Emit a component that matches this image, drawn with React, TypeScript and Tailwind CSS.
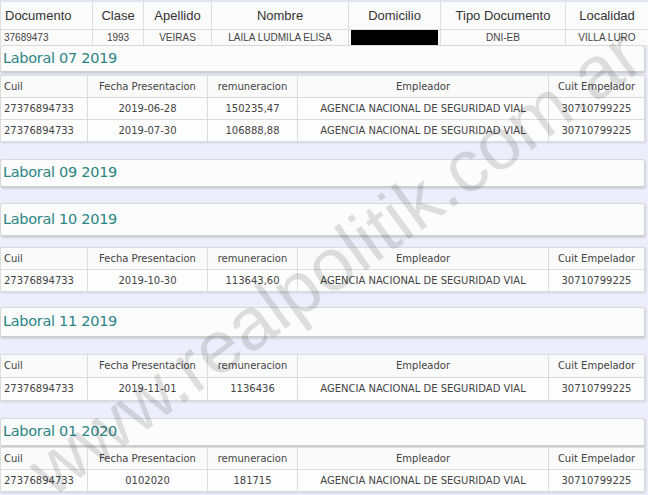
import React from "react";

type Row = { cuil: string; fecha: string; rem: string; emp: string; cuit: string };

const EMP = "AGENCIA NACIONAL DE SEGURIDAD VIAL";
const CUIT = "30710799225";
const CUIL = "27376894733";

const sections: { title: string; rows: Row[]; top: string; gap: string; ph: string; rh: string }[] = [
  {
    title: "Laboral 07 2019",
    top: "mt-0",
    gap: "mt-[2px]",
    ph: "h-[28px]",
    rh: "h-[22px]",
    rows: [
      { cuil: CUIL, fecha: "2019-06-28", rem: "150235,47", emp: EMP, cuit: CUIT },
      { cuil: CUIL, fecha: "2019-07-30", rem: "106888,88", emp: EMP, cuit: CUIT },
    ],
  },
  { title: "Laboral 09 2019", top: "mt-[17px]", gap: "mt-0", ph: "h-[29px]", rh: "h-[22px]", rows: [] },
  {
    title: "Laboral 10 2019",
    top: "mt-[15px]",
    gap: "mt-[10px]",
    ph: "h-[34px]",
    rh: "h-[22px]",
    rows: [{ cuil: CUIL, fecha: "2019-10-30", rem: "113643,60", emp: EMP, cuit: CUIT }],
  },
  {
    title: "Laboral 11 2019",
    top: "mt-[15px]",
    gap: "mt-4",
    ph: "h-[31px]",
    rh: "h-[23px]",
    rows: [{ cuil: CUIL, fecha: "2019-11-01", rem: "1136436", emp: EMP, cuit: CUIT }],
  },
  {
    title: "Laboral 01 2020",
    top: "mt-[17px]",
    gap: "mt-0",
    ph: "h-[29px]",
    rh: "h-[22px]",
    rows: [{ cuil: CUIL, fecha: "0102020", rem: "181715", emp: EMP, cuit: CUIT }],
  },
];

function TopTable() {
  const head = ["Documento", "Clase", "Apellido", "Nombre", "Domicilio", "Tipo Documento", "Localidad"];
  const widths = ["w-[92px]", "w-[51px]", "w-[68px]", "w-[137px]", "w-[92px]", "w-[125px]", "w-[83px]"];
  return (
    <table className="w-[648px] table-fixed border-collapse bg-[#fbfbfb] font-['Liberation_Sans',Arial,sans-serif]">
      <thead>
        <tr className="h-[28px] border-t-2 border-[#e2e4ee]">
          {head.map((h, i) => (
            <th key={h} className={`${widths[i]} border border-[#dedede] border-t-0 text-[13px] font-normal text-[#333] ${i === 0 ? "text-left pl-[4px]" : "text-center"}`}>
              {h}
            </th>
          ))}
        </tr>
      </thead>
      <tbody>
        <tr className="h-[15px] text-[10px] leading-[15px] text-[#444]">
          <td className="border-x border-[#dedede] pl-[3px]">37689473</td>
          <td className="border-x border-[#dedede] text-center">1993</td>
          <td className="border-x border-[#dedede] text-center">VEIRAS</td>
          <td className="border-x border-[#dedede] text-center">LAILA LUDMILA ELISA</td>
          <td className="border-x border-[#dedede] px-[2px]">
            <div className="h-[15px] bg-black" />
          </td>
          <td className="border-x border-[#dedede] text-center">DNI-EB</td>
          <td className="border-x border-[#dedede] text-center">VILLA LURO</td>
        </tr>
      </tbody>
    </table>
  );
}

function Panel({ title, top, ph }: { title: string; top: string; ph: string }) {
  return (
    <div className={`${top} ${ph} mr-[3px] rounded-[3px] border border-[#d8d8d8] border-b-2 border-b-[#cfcfcf] bg-[#fcfcfc] pl-[2px] flex items-center shadow-[1px_1px_2px_rgba(0,0,0,0.12)]`}>
      <span className="text-[14.5px] leading-none text-[#2b8584] font-['DejaVu_Sans',Verdana,sans-serif] tracking-[-0.3px]">{title}</span>
    </div>
  );
}

function WorkTable({ rows, gap, rh }: { rows: Row[]; gap: string; rh: string }) {
  const cell = "border border-[#dcdcdc] font-normal";
  return (
    <table className={`${gap} w-[644px] table-fixed border-collapse bg-[#fdfdfd] text-[10px] text-[#444] font-['DejaVu_Sans',Verdana,sans-serif] shadow-[1px_1px_2px_rgba(0,0,0,0.12)]`}>
      <thead>
        <tr className={`${rh} bg-[#fafafa]`}>
          <th className={`${cell} w-[87px] text-left pl-[3px]`}>Cuil</th>
          <th className={`${cell} w-[120px] text-center`}>Fecha Presentacion</th>
          <th className={`${cell} w-[90px] text-center`}>remuneracion</th>
          <th className={`${cell} w-[251px] text-center`}>Empleador</th>
          <th className={`${cell} w-[96px] text-center`}>Cuit Empelador</th>
        </tr>
      </thead>
      <tbody>
        {rows.map((r, i) => (
          <tr key={i} className={rh}>
            <td className={`${cell} pl-[3px]`}>{r.cuil}</td>
            <td className={`${cell} text-center`}>{r.fecha}</td>
            <td className={`${cell} text-center`}>{r.rem}</td>
            <td className={`${cell} text-center`}>{r.emp}</td>
            <td className={`${cell} text-center`}>{r.cuit}</td>
          </tr>
        ))}
      </tbody>
    </table>
  );
}

export default function App() {
  return (
    <div className="relative w-[648px] h-[495px] overflow-hidden bg-[#eceffb]">
      <TopTable />
      {sections.map((s) => (
        <div key={s.title}>
          <Panel title={s.title} top={s.top} ph={s.ph} />
          {s.rows.length > 0 && <WorkTable rows={s.rows} gap={s.gap} rh={s.rh} />}
        </div>
      ))}
      <div className="pointer-events-none absolute left-[335px] top-[262px] -translate-x-1/2 -translate-y-1/2 -rotate-[36deg] whitespace-nowrap text-[74px] leading-none text-black/[0.12] font-['Liberation_Sans',Arial,sans-serif]">
        www.realpolitik.com.ar
      </div>
    </div>
  );
}
